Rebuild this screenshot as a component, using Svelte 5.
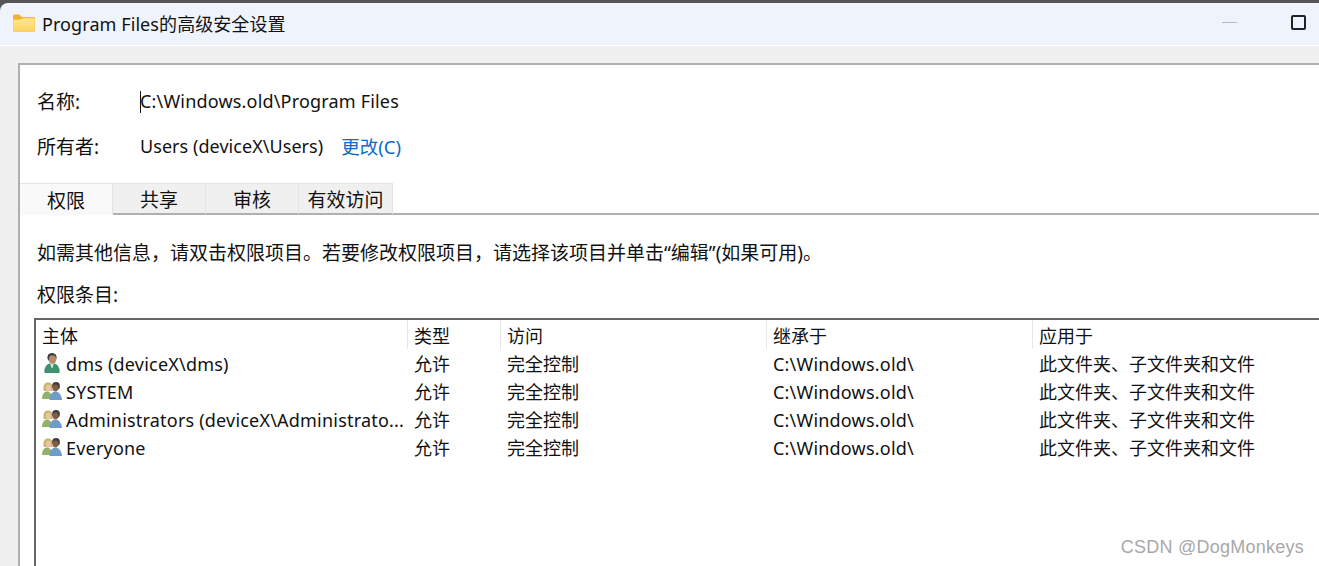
<script>
  const rows = [
    { name: "dms (deviceX\\dms)", group: false },
    { name: "SYSTEM", group: true },
    { name: "Administrators (deviceX\\Administrato...", group: true },
    { name: "Everyone", group: true }
  ];
  const tabs = ["权限", "共享", "审核", "有效访问"];
  const heads = ["主体", "类型", "访问", "继承于", "应用于"];
</script>

<div class="window">
  <header class="titlebar">
    <svg class="folder" viewBox="0 0 22 18" width="22" height="18">
      <defs>
        <linearGradient id="fold" x1="0" y1="0" x2="0" y2="1">
          <stop offset="0" stop-color="#ffe58f" />
          <stop offset="1" stop-color="#fdd463" />
        </linearGradient>
      </defs>
      <path d="M0 2a1.500 1.500 0 0 1 1.500-1.500h5l2.500 2.500h11.500a1.500 1.500 0 0 1 1.500 1.500v2h-22z" fill="#f0b429" />
      <path d="M0 5.500h7.500l2.500-1.500h10.500a1.500 1.500 0 0 1 1.500 1.500v10.500a1.500 1.500 0 0 1-1.500 1.500h-19a1.500 1.500 0 0 1-1.500-1.500z" fill="url(#fold)" stroke="#f5bf45" stroke-width="0.6" />
    </svg>
    <span class="title">Program Files的高级安全设置</span>
    <span class="min"></span>
    <span class="max"></span>
  </header>

  <div class="outer">
    <main class="panel">
      <div class="field name-row">
        <span class="label">名称:</span>
        <span class="value"><i class="caret"></i>C:\Windows.old\Program Files</span>
      </div>
      <div class="field owner-row">
        <span class="label">所有者:</span>
        <span class="value">Users (deviceX\Users)</span>
        <span class="link">更改(C)</span>
      </div>

      <div class="tabs">
        {#each tabs as t, i}
          <div class="tab" class:active={i === 0}>{t}</div>
        {/each}
        <div class="tab-rest"></div>
      </div>

      <p class="info">如需其他信息，请双击权限项目。若要修改权限项目，请选择该项目并单击“编辑”(如果可用)。</p>
      <p class="entries">权限条目:</p>

      <div class="list">
        <div class="row head">
          {#each heads as h}
            <div class="cell">{h}</div>
          {/each}
        </div>
        {#each rows as r}
          <div class="row">
            <div class="cell who">
              {#if r.group}
                <svg class="icon" viewBox="0 0 22 20" width="22" height="20">
                  <path d="M2.500 7c0-4 2-5.500 4.500-5.500s4.500 1.500 4.500 5.500v3h-9z" fill="#c9b26c" />
                  <ellipse cx="7.500" cy="7" rx="2.800" ry="3.400" fill="#e9c4a0" />
                  <path d="M1 18c0-5 2.500-7.500 5-7.500s5.500 2.500 5.500 7.500z" fill="#8fb36b" />
                  <circle cx="15" cy="5" r="3.900" fill="#3d3d3d" />
                  <ellipse cx="14.500" cy="7" rx="2.800" ry="3.400" fill="#8a5a3c" />
                  <path d="M8.500 19c0-5.500 3-8.500 6-8.500s6 3 6.500 8.500z" fill="#6f9cc9" />
                </svg>
              {:else}
                <svg class="icon" viewBox="0 0 22 22" width="22" height="22">
                  <path d="M3.500 21c-1-6 3-10 7.500-10s8.500 4 7.500 10z" fill="#3f9170" />
                  <path d="M9 11h4l-1.500 5h-1z" fill="#cfe8da" />
                  <circle cx="11" cy="5.500" r="4.600" fill="#3a3a3a" />
                  <ellipse cx="11.500" cy="7.500" rx="3.600" ry="4.200" fill="#b98a66" />
                </svg>
              {/if}
              <span class="who-name">{r.name}</span>
            </div>
            <div class="cell">允许</div>
            <div class="cell">完全控制</div>
            <div class="cell latin">C:\Windows.old\</div>
            <div class="cell">此文件夹、子文件夹和文件</div>
          </div>
        {/each}
      </div>
    </main>
  </div>

  <div class="mark">CSDN @DogMonkeys</div>
</div>

<style>
  :global(body) {
    margin: 0;
    overflow: hidden;
    background: #fff;
  }
  .window {
    position: relative;
    width: 1319px;
    height: 566px;
    overflow: hidden;
    background: #555;
    padding-top: 3px;
    box-sizing: border-box;
    font-family: "Noto Sans", "Noto Sans CJK SC", sans-serif;
    font-size: 18px;
    color: #111;
  }
  .titlebar {
    height: 43px;
    box-sizing: border-box;
    display: flex;
    align-items: center;
    background: #eff3fb;
    border-bottom: 1px solid #fff;
    border-top-left-radius: 8px;
    padding: 0 0 3px 13px;
  }
  .folder {
    margin-right: 7px;
  }
  .title {
    flex: 1;
    letter-spacing: .08px;
  }
  .min {
    width: 15px;
    height: 1px;
    background: #bbb;
    margin-right: 54px;
  }
  .max {
    width: 11px;
    height: 11px;
    border: 2px solid #222;
    border-radius: 2px;
    margin-right: 13px;
  }
  .outer {
    background: #f0f0f0;
    padding: 17px 0 0 18px;
    height: 520px;
    box-sizing: border-box;
  }
  .panel {
    background: #fff;
    border-top: 2px solid #b0b0b0;
    border-left: 2px solid #b0b0b0;
    height: 520px;
    padding-top: 23px;
    box-sizing: border-box;
  }
  .field {
    display: flex;
    align-items: center;
    height: 26px;
    padding-left: 17px;
  }
  .owner-row {
    margin-top: 19px;
  }
  .label {
    width: 103px;
    font-size: 19px;
  }
  .value {
    letter-spacing: .18px;
  }
  .owner-row .value {
    letter-spacing: .05px;
  }
  .caret {
    display: inline-block;
    width: 1px;
    height: 22px;
    margin-right: -1px;
    background: #111;
    vertical-align: -5px;
  }
  .link {
    color: #0a6cc8;
    margin-left: 18px;
    font-size: 18.5px;
  }
  .tabs {
    display: flex;
    margin-top: 24px;
    height: 32px;
    font-size: 19px;
  }
  .tab {
    width: 93px;
    box-sizing: border-box;
    display: flex;
    align-items: center;
    justify-content: center;
    background: #f0f0f0;
    border: 1px solid #e3e3e3;
    border-left: 0;
    border-bottom: 2px solid #b0b0b0;
    white-space: nowrap;
  }
  .tab:nth-child(4) {
    width: 94px;
  }
  .tab.active {
    background: #f9f9f9;
    border-bottom-color: #f9f9f9;
    padding-top: 2px;
  }
  .tab-rest {
    flex: 1;
    border-bottom: 2px solid #b0b0b0;
  }
  .info {
    margin: 25px 0 0 17px;
    line-height: 26px;
    white-space: nowrap;
    font-size: 19px;
  }
  .entries {
    margin: 16px 0 0 17px;
    line-height: 26px;
    font-size: 19px;
  }
  .list {
    margin: 10px 0 0 14px;
    width: 1400px;
    height: 300px;
    border: 2px solid #666;
    box-sizing: border-box;
  }
  .row {
    display: grid;
    grid-template-columns: 372px 93px 266px 266px 1fr;
    height: 28px;
    align-items: center;
    white-space: nowrap;
  }
  .row.head {
    height: 29px;
    align-items: stretch;
  }
  .row.head .cell {
    display: flex;
    align-items: center;
    border-right: 1px solid #e6e6e6;
  }
  .cell {
    padding-left: 6px;
    min-width: 0;
    box-sizing: border-box;
  }
  .latin {
    letter-spacing: .2px;
    padding-top: 2px;
  }
  .who {
    display: flex;
    align-items: center;
    padding-left: 5px;
  }
  .icon {
    flex: none;
    margin-right: 3px;
  }
  .who-name {
    letter-spacing: .2px;
    padding-top: 2px;
  }
  .mark {
    position: absolute;
    right: 15px;
    bottom: 8px;
    color: #a8a8a8;
    font-family: "Liberation Sans", sans-serif;
    font-size: 18px;
    letter-spacing: .25px;
  }
</style>
